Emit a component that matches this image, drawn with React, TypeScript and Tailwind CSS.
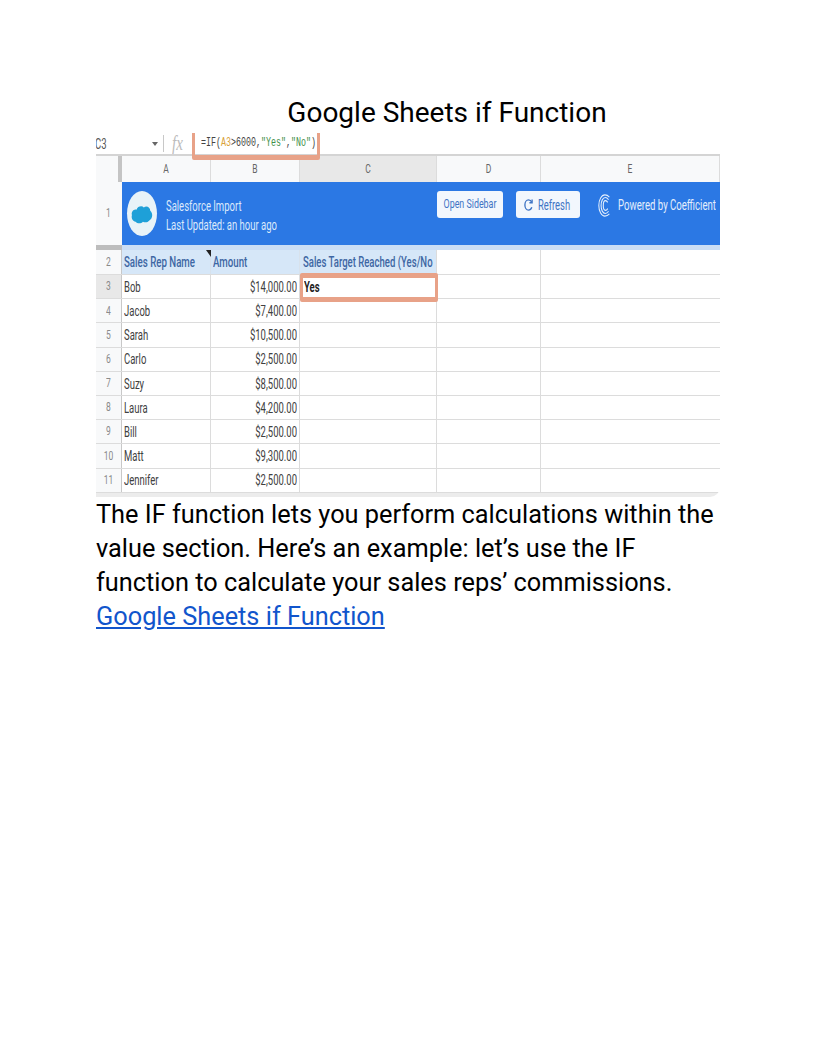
const rows = [
  ["3", "Bob", "$14,000.00"],
  ["4", "Jacob", "$7,400.00"],
  ["5", "Sarah", "$10,500.00"],
  ["6", "Carlo", "$2,500.00"],
  ["7", "Suzy", "$8,500.00"],
  ["8", "Laura", "$4,200.00"],
  ["9", "Bill", "$2,500.00"],
  ["10", "Matt", "$9,300.00"],
  ["11", "Jennifer", "$2,500.00"],
];

function Tall({ children, className = "" }: { children: React.ReactNode; className?: string }) {
  return <span className={`inline-block scale-y-[1.5] whitespace-nowrap leading-none ${className}`}>{children}</span>;
}

function HeaderCell({ w, label, active = false }: { w: string; label: string; active?: boolean }) {
  return (
    <div className={`${w} shrink-0 flex items-center justify-center border-r border-[#dcdcdc] ${active ? "bg-[#e8e8e8]" : ""}`}>
      <Tall className="text-[8.5px] text-[#666]">{label}</Tall>
    </div>
  );
}

function RowLabel({ n, active = false }: { n: string; active?: boolean }) {
  return (
    <div className={`w-[26px] shrink-0 border-r border-[#c8c8c8] flex items-center justify-center ${active ? "bg-[#e8e8e8]" : "bg-[#f8f9fa]"}`}>
      <Tall className="text-[8.5px] text-[#8a8a8a]">{n}</Tall>
    </div>
  );
}

export default function App() {
  return (
    <div className="w-[816px] h-[1056px] bg-white pt-24 px-24 font-[Roboto,sans-serif] text-black overflow-hidden">
      <div className="pl-[78px] text-center text-[28px] leading-[34px] h-[34px] whitespace-nowrap">Google Sheets if Function</div>

      <div className="relative mt-[3px] w-[624px] h-[364px] overflow-hidden rounded-br-[10px] text-[#404040]">
        {/* formula bar */}
        <div className="flex items-center h-[21px]">
          <div className="w-[54px] shrink-0 -ml-[1px] h-full flex items-center">
            <Tall className="text-[9.5px] text-[#555]">C3</Tall>
          </div>
          <svg width="8" height="6" viewBox="0 0 8 6" className="shrink-0 ml-[2px]"><path d="M1 1h6L4 5z" fill="#666" /></svg>
          <div className="ml-[4px] shrink-0 w-px h-[17px] bg-[#c8c8c8]" />
          <span className="ml-[8px] w-[29px] shrink-0 font-['Liberation_Serif',serif] italic text-[15px] leading-none scale-y-[1.4] origin-center text-[#bcbcbc]">fx</span>
          <span className="font-['Liberation_Mono',monospace] text-[8.33px] leading-none text-[#444] inline-block scale-y-[1.6] whitespace-nowrap">
            =IF(<span className="text-[#d9a23b]">A3</span>&gt;6000,<span className="text-[#3f8f4a]">"Yes"</span>,<span className="text-[#3f8f4a]">"No"</span>)
          </span>
        </div>

        {/* column headers */}
        <div className="flex h-[28px] border-t-2 border-[#d4d4d4] bg-[#f8f9fa]">
          <div className="w-[26px] shrink-0 border-r-[4px] border-[#c4c4c4]" />
          <HeaderCell w="w-[89px]" label="A" />
          <HeaderCell w="w-[89px]" label="B" />
          <HeaderCell w="w-[137px]" label="C" active />
          <HeaderCell w="w-[104px]" label="D" />
          <HeaderCell w="w-[179px]" label="E" />
        </div>

        {/* row 1 banner */}
        <div className="flex h-[63px]">
          <div className="w-[26px] shrink-0 bg-[#f8f9fa] flex items-center justify-center pr-[1px]">
            <Tall className="text-[8.5px] text-[#8a8a8a]">1</Tall>
          </div>
          <div className="flex-1 bg-[#2b78e4] flex items-start">
            <div className="ml-[5px] mt-[9px] w-[30px] h-[45px] shrink-0 rounded-[50%] bg-[#e8f3f8] flex items-center justify-center">
              <svg width="22" height="24" viewBox="0 0 24 22" preserveAspectRatio="none">
                <path d="M5 18c-3 0-5-3-4-6-1-3 2-6 5-5 1-3 6-4 8-2 3-2 7 0 7 3 3 2 3 7-1 9-2 2-5 2-7 1-2 2-6 2-8 0z" fill="#1ea0d8" />
              </svg>
            </div>
            <div className="ml-[9px] mt-[19px] w-[271px] shrink-0 flex flex-col gap-[9px] text-[9.5px] text-[#dbe9fb] items-start">
              <Tall>Salesforce Import</Tall>
              <Tall>Last Updated: an hour ago</Tall>
            </div>
            <div className="mt-[9px] w-[66px] h-[27px] shrink-0 rounded-[3px] bg-[#f2f7fd] flex items-center justify-center">
              <Tall className="text-[8.9px] text-[#3f74c4]">Open Sidebar</Tall>
            </div>
            <div className="ml-[13px] mt-[9px] w-[64px] h-[27px] shrink-0 rounded-[3px] bg-[#f2f7fd] flex items-center pl-[8px] gap-[5px] text-[#3f74c4]">
              <svg width="9" height="14" viewBox="0 0 10 15" fill="none" stroke="#3f74c4" strokeWidth="1.5" preserveAspectRatio="none">
                <path d="M8.6 4.5C7.8 2.8 6.5 2 5 2 2.8 2 1 4.4 1 7.5S2.8 13 5 13c1.7 0 3-1.2 3.700-3" />
                <path d="M9 1.500v3.600H6" />
              </svg>
              <Tall className="text-[9.4px]">Refresh</Tall>
            </div>
            <svg width="13" height="23" viewBox="0 0 16 26" fill="none" stroke="#e3eefc" strokeWidth="1.300" preserveAspectRatio="none" className="ml-[18px] mt-[12px] shrink-0">
              <path d="M14 3.500C12.500 2 10.500 1 8.500 1 4.400 1 1 6.400 1 13s3.400 12 7.500 12c2 0 4-1 5.500-2.500" />
              <path d="M13 6.500C11.800 5 10.500 4 9 4 6 4 3.800 8 3.800 13S6 22 9 22c1.500 0 2.800-1 4-2.500" />
              <path d="M12 9.500C11 8 10.200 7.500 9.200 7.500 7.500 7.500 6.500 10 6.500 13s1 5.500 2.700 5.500c1 0 1.800-.5 2.800-2" />
            </svg>
            <span className="ml-[7px] mt-[16px] text-[9.6px] text-[#e3eefc]"><Tall>Powered by Coefficient</Tall></span>
          </div>
        </div>

        <div className="h-[5px] flex">
          <div className="w-[26px] shrink-0 bg-[#bdbdbd]" />
          <div className="flex-1 bg-[#c9ddf5]" />
        </div>

        {/* row 2 */}
        <div className="flex h-[25px] border-b border-[#dcdcdc]">
          <RowLabel n="2" />
          <div className="w-[89px] shrink-0 bg-[#d6e7f8] border-r border-[#d8e2ec] pl-[2px] flex items-center">
            <Tall className="text-[9.7px] font-medium text-[#3d66a3]">Sales Rep Name</Tall>
          </div>
          <div className="w-[89px] shrink-0 bg-[#d6e7f8] border-r border-[#d8e2ec] pl-[2px] flex items-center">
            <Tall className="text-[9.7px] font-medium text-[#3d66a3]">Amount</Tall>
          </div>
          <div className="w-[137px] shrink-0 bg-[#d6e7f8] border-r border-[#dcdcdc] pl-[3px] flex items-center">
            <Tall className="text-[9.55px] font-medium text-[#3d66a3]">Sales Target Reached (Yes/No</Tall>
          </div>
          <div className="w-[104px] shrink-0 border-r border-[#dcdcdc]" />
          <div className="w-[179px] shrink-0" />
        </div>

        {/* data */}
        {rows.map(([n, name, amt]) => (
          <div key={n} className="flex h-[24.2px] border-b border-[#dcdcdc]">
            <RowLabel n={n} active={n === "3"} />
            <div className="w-[89px] shrink-0 border-r border-[#dcdcdc] pl-[2px] flex items-center">
              <Tall className="text-[9.5px]">{name}</Tall>
            </div>
            <div className="w-[89px] shrink-0 border-r border-[#dcdcdc] pr-[2px] flex items-center justify-end">
              <Tall className="text-[9.5px]">{amt}</Tall>
            </div>
            <div className="w-[137px] shrink-0 border-r border-[#dcdcdc] pl-[4px] flex items-center">
              {n === "3" && <Tall className="text-[9.5px] font-bold text-[#222]">Yes</Tall>}
            </div>
            <div className="w-[104px] shrink-0 border-r border-[#dcdcdc]" />
            <div className="w-[179px] shrink-0" />
          </div>
        ))}
        <div className="h-[5px] bg-[#ececec]" />

        {/* overlays */}
        <div className="absolute left-[96px] -top-[6px] w-[128px] h-[33px] border-x-[3px] border-y-[5px] border-[#e8a288] rounded-[2px]" />
        <div className="absolute left-[204px] top-[140px] w-[138px] h-[29px] border-x-[3px] border-y-[5px] border-[#e8a288] rounded-[2px]" />
        <div className="absolute left-[110px] top-[117px] w-0 h-0 border-t-[7px] border-l-[5px] border-t-[#222] border-l-transparent" />
      </div>

      <div className="pt-[1px] text-[25.33px] leading-[34px]">
        <p className="whitespace-nowrap">The IF function lets you perform calculations within the</p>
        <p className="whitespace-nowrap">value section. Here’s an example: let’s use the IF</p>
        <p className="whitespace-nowrap">function to calculate your sales reps’ commissions.</p>
        <a className="text-[#1155cc] underline whitespace-nowrap" href="#">Google Sheets if Function</a>
      </div>
    </div>
  );
}
